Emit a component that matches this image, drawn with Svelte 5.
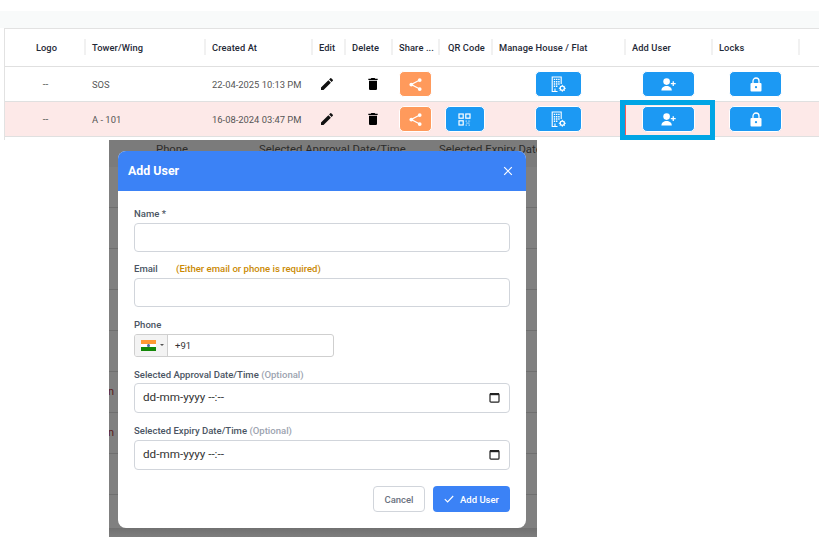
<script>
  const cols = [
    { label: 'Logo', center: true },
    { label: 'Tower/Wing' },
    { label: 'Created At' },
    { label: 'Edit' },
    { label: 'Delete' },
    { label: 'Share ...' },
    { label: 'QR Code', wide: true },
    { label: 'Manage House / Flat' },
    { label: 'Add User' },
    { label: 'Locks' },
    { label: '' }
  ];
  const rows = [
    { tower: 'SOS', created: '22-04-2025 10:13 PM', qr: false, alt: false },
    { tower: 'A - 101', created: '16-08-2024 03:47 PM', qr: true, alt: true }
  ];
</script>

<main class="page">
  <div class="band"></div>
  <section class="table">
    <div class="row head">
      {#each cols as c}
        <div class="th" class:center={c.center} class:wide={c.wide}><span>{c.label}</span></div>
      {/each}
    </div>
    {#each rows as r}
      <div class="row body" class:alt={r.alt}>
        <div class="td dash">--</div>
        <div class="td">{r.tower}</div>
        <div class="td">{r.created}</div>
        <div class="td ic c-edit">
          <svg width="16" height="16" viewBox="0 0 24 24" fill="#111"><path d="M3 17.25V21h3.75L17.81 9.94l-3.75-3.75L3 17.25zM20.71 7.04a1 1 0 0 0 0-1.41l-2.34-2.34a1 1 0 0 0-1.41 0l-1.83 1.83 3.75 3.75 1.83-1.83z"/></svg>
        </div>
        <div class="td ic c-del">
          <svg width="16" height="16" viewBox="0 0 24 24" fill="#000"><path d="M6 19c0 1.1.9 2 2 2h8c1.1 0 2-.9 2-2V7H6v12zM19 4h-3.5l-1-1h-5l-1 1H5v2h14V4z"/></svg>
        </div>
        <div class="td ic c-shift">
          <button class="btn orange w-share" aria-label="Share">
            <svg width="15" height="15" viewBox="0 0 16 16" fill="#fff" stroke="#fff"><path d="M12.5 3.2 3.5 8l9 4.8" fill="none" stroke-width="1.3"/><circle cx="12.5" cy="3.2" r="2" stroke="none"/><circle cx="3.5" cy="8" r="2" stroke="none"/><circle cx="12.5" cy="12.8" r="2" stroke="none"/></svg>
          </button>
        </div>
        <div class="td ic c-qr">
          {#if r.qr}
            <button class="btn blue w-qr" aria-label="QR Code">
              <svg width="13" height="13" viewBox="0 0 13 13" fill="none" stroke="#fff" stroke-width="1.2"><rect x="1" y="1" width="4.2" height="4.2"/><rect x="7.8" y="1" width="4.2" height="4.2"/><rect x="1" y="7.8" width="4.2" height="4.2"/><path d="M7.6 8.2h1.2M10.4 8.2h2M8.4 10.2h3M7.6 12.2h1.4M10.6 12.2h1.8" stroke-dasharray="1.2 .7" opacity=".75"/></svg>
            </button>
          {/if}
        </div>
        <div class="td ic c-shift">
          <button class="btn blue w-manage" aria-label="Manage House">
            <svg width="16" height="17" viewBox="0 0 16 17" fill="none"><path d="M6.5 15.5H1.2V1h9v7" stroke="#fff" stroke-width="1.1"/><path d="M2.8 2.7h1.4v1.4H2.8zM5 2.7h1.4v1.4H5zM7.2 2.7h1.4v1.4H7.2zM2.8 5h1.4v1.4H2.8zM5 5h1.4v1.4H5zM7.2 5h1.4v1.4H7.2zM2.8 7.3h1.4v1.4H2.8zM5 7.3h1.4v1.4H5zM7.2 7.3h1.4v1.4H7.2zM2.8 9.6h1.4V11H2.8zM5 9.6h1.4V11H5z" fill="#fff"/><path d="M4 15.5v-3" stroke="#fff" stroke-width="1.1"/><circle cx="11.3" cy="12.3" r="2.1" stroke="#fff" stroke-width="1.3"/><path d="M11.3 8.8v1.3M11.3 14.5v1.3M7.8 12.3h1.3M13.5 12.3h1.3M8.9 9.9l.8.8M12.9 13.9l.8.8M8.9 14.7l.8-.8M12.9 10.7l.8-.8" stroke="#fff" stroke-width="1"/></svg>
          </button>
        </div>
        <div class="td ic c-shift">
          <button class="btn blue w-user" aria-label="Add User">
            <svg width="15" height="13" viewBox="0 0 15 13" fill="#fff"><circle cx="5.6" cy="3.6" r="3.3"/><path d="M.4 12.6c0-3 2.4-4.6 5.2-4.6s5.2 1.6 5.2 4.6z"/><path d="M11.6 3.6h1.3v1.8h1.8v1.3h-1.8v1.8h-1.3V6.7H9.8V5.4h1.8z" transform="translate(0 -.4)"/></svg>
          </button>
        </div>
        <div class="td ic c-shift">
          <button class="btn blue w-user" aria-label="Locks">
            <svg width="12" height="15" viewBox="0 0 12 15"><path d="M3 6.5V4a3 3 0 0 1 6 0v2.5" fill="none" stroke="#fff" stroke-width="1.3"/><rect x=".5" y="6" width="11" height="8.5" rx="1" fill="#fff"/><circle cx="6" cy="10.2" r="1.1" fill="#1c99f3"/></svg>
          </button>
        </div>
        <div class="td"></div>
      </div>
    {/each}
  </section>

  <div class="highlight"></div>

  <div class="overlay">
    <div class="bg-head">
      <span class="bg-phone">Phone</span>
      <span class="bg-appr">Selected Approval Date/Time</span>
      <span class="bg-exp">Selected Expiry Date/Time</span>
    </div>
    {#each [0, 1, 2, 3, 4, 5, 6, 7] as i}
      <div class="bg-row">{#if i === 5 || i === 6}<span class="bg-n">n</span>{/if}</div>
    {/each}

    <div class="modal">
      <header class="m-head">
        <h2>Add User</h2>
        <svg width="10" height="10" viewBox="0 0 10 10" stroke="#fff" stroke-width="1.2"><path d="M1.2 1.2l7.6 7.6M8.8 1.2 1.2 8.8"/></svg>
      </header>
      <form class="m-body">
        <div class="field f-name">
          <div class="lab">Name *</div>
          <input class="inp" type="text" />
        </div>
        <div class="field f-email">
          <div class="lab">Email <span class="hint">(Either email or phone is required)</span></div>
          <input class="inp" type="text" />
        </div>
        <div class="field f-phone">
          <div class="lab">Phone</div>
          <div class="phone">
            <div class="flagbox">
              <span class="flag"><i class="saffron"></i><i class="white"><b></b></i><i class="green"></i></span>
              <span class="caret"></span>
            </div>
            <span class="code">+91</span>
          </div>
        </div>
        <div class="field f-date1">
          <div class="lab short">Selected Approval Date/Time <span class="opt">(Optional)</span></div>
          <div class="date"><span>dd-mm-yyyy --:--</span>
            <svg width="11" height="11" viewBox="0 0 11 11" fill="none"><rect x="1" y="1.6" width="9" height="8.6" rx="1" stroke="#222" stroke-width="1.2"/><rect x="1" y="1" width="9" height="2.2" fill="#222"/></svg>
          </div>
        </div>
        <div class="field f-date2">
          <div class="lab">Selected Expiry Date/Time <span class="opt">(Optional)</span></div>
          <div class="date"><span>dd-mm-yyyy --:--</span>
            <svg width="11" height="11" viewBox="0 0 11 11" fill="none"><rect x="1" y="1.6" width="9" height="8.6" rx="1" stroke="#222" stroke-width="1.2"/><rect x="1" y="1" width="9" height="2.2" fill="#222"/></svg>
          </div>
        </div>
        <div class="actions">
          <button type="button" class="cancel">Cancel</button>
          <button type="button" class="submit">
            <svg width="10" height="8" viewBox="0 0 10 8" fill="none" stroke="#fff" stroke-width="1.1"><path d="M.8 4.2 3.6 7 9.2 1"/></svg>
            Add User
          </button>
        </div>
      </form>
    </div>
  </div>
</main>

<style>
  :global(body) {
    margin: 0;
    background: #fff;
    font-family: Roboto, "Liberation Sans", sans-serif;
  }
  .page {
    position: relative;
    width: 831px;
    height: 559px;
    overflow: hidden;
    padding-top: 11px;
    box-sizing: border-box;
  }
  .band {
    width: 819px;
    height: 17px;
    background: #f8fafa;
  }
  .table {
    margin-left: 4px;
    width: 815px;
    height: 112px;
    border-top: 1px solid #e2e2e2;
    border-left: 1px solid #e2e2e2;
    box-sizing: border-box;
  }
  .row {
    display: grid;
    grid-template-columns: 81px 120px 107px 33px 47px 47px 53px 133px 87px 87px 19px;
    border-bottom: 1px solid #e0e0e0;
    box-sizing: border-box;
  }
  .head { height: 38px; }
  .body { height: 35px; }
  .alt { background: #fde9e8; }
  .th {
    display: flex;
    align-items: center;
    padding-left: 6px;
    font-size: 9.3px;
    font-weight: 500;
    letter-spacing: .1px;
    color: #1f2937;
    position: relative;
    white-space: nowrap;
    overflow: hidden;
  }
  .th.center { justify-content: center; padding-left: 2px; padding-right: 0; }
  .th.wide { padding-left: 8px; }
  .th::after {
    content: "";
    position: absolute;
    right: 0;
    top: 10px;
    height: 16px;
    width: 2px;
    background: #f1f1f1;
  }
  .th:last-child::after { display: none; }
  .td {
    display: flex;
    align-items: center;
    padding-left: 6px;
    font-size: 9.4px;
    color: #555;
    white-space: nowrap;
  }
  .dash { justify-content: center; padding-left: 0; font-size: 10px; color: #666; }
  .ic { justify-content: center; padding-left: 0; }
  .c-edit { padding-right: 6px; }
  .c-del { padding-left: 6px; }
  .c-shift { padding-right: 2px; }
  .c-qr { padding-right: 4px; }
  .btn {
    display: flex;
    align-items: center;
    justify-content: center;
    height: 26px;
    padding: 0;
    border: 1px solid #fff;
    border-radius: 5px;
    box-sizing: border-box;
    flex: none;
  }
  .orange { background: #ff9a5c; }
  .blue { background: #1c99f3; }
  .w-share { width: 33px; }
  .w-qr { width: 40px; }
  .w-manage { width: 47px; }
  .w-user { width: 53px; }
  .highlight {
    position: absolute;
    left: 620px;
    top: 100px;
    width: 95px;
    height: 40px;
    box-sizing: border-box;
    border: 5px solid #00a5e5;
  }
  .highlight::after {
    content: "";
    position: absolute;
    left: 0;
    top: 0;
    bottom: 0;
    width: 1px;
    background: #ef5a5a;
  }
  .overlay {
    position: absolute;
    left: 109px;
    top: 140px;
    width: 428px;
    height: 397px;
    overflow: hidden;
    background: #808080;
  }
  .bg-head {
    position: relative;
    height: 27px;
    background: #7b7b7b;
    font-size: 11.3px;
    font-weight: 400;
    color: #2b2b2b;
  }
  .bg-head span { position: absolute; top: 3px; white-space: nowrap; }
  .bg-phone { left: 47px; }
  .bg-appr { left: 150px; }
  .bg-exp { left: 330px; }
  .bg-row {
    height: 41px;
    border-bottom: 1px solid #6f6f6f;
    box-sizing: border-box;
    position: relative;
    color: #5a1a1a;
    font-size: 11px;
  }
  .bg-n { position: absolute; left: -1px; top: 13px; }
  .modal {
    position: absolute;
    left: 9px;
    top: 11px;
    width: 408px;
    height: 377px;
    background: #fff;
    border-radius: 8px;
    overflow: hidden;
  }
  .overlay::after {
    content: "";
    position: absolute;
    left: 0;
    right: 0;
    bottom: 0;
    height: 9px;
    background: linear-gradient(#66666699, #7a7a7a66);
    pointer-events: none;
  }
  .m-head {
    height: 40px;
    background: #3b82f6;
    display: flex;
    align-items: center;
    justify-content: space-between;
    padding: 0 13px 1px 10px;
    box-sizing: border-box;
  }
  .m-head h2 {
    margin: 0;
    font-size: 12.4px;
    font-weight: 700;
    color: #fff;
  }
  .m-body {
    position: relative;
    padding: 16px 16px 0;
    display: flex;
    flex-direction: column;
  }
  .field { display: flex; flex-direction: column; }
  .lab {
    height: 16px;
    line-height: 14px;
    font-size: 9.55px;
    font-weight: 500;
    color: #4b5563;
    white-space: nowrap;
  }
  .lab.short { height: 15px; }
  .f-email { margin-top: 10px; }
  .f-phone { margin-top: 11px; }
  .f-date1 { margin-top: 11px; }
  .f-date2 { margin-top: 11px; }
  .hint { margin-left: 16px; color: #ca8a04; }
  .opt { color: #9ca3af; }
  .inp {
    width: 376px;
    height: 29px;
    margin: 0;
    padding: 0 8px;
    box-sizing: border-box;
    border: 1px solid #d1d5db;
    border-radius: 4px;
    outline: none;
    background: #fff;
  }
  .phone {
    display: flex;
    align-items: center;
    width: 200px;
    height: 23px;
    box-sizing: border-box;
    border: 1px solid #cfcfcf;
    border-radius: 3px;
    overflow: hidden;
  }
  .flagbox {
    display: flex;
    align-items: center;
    width: 33px;
    height: 100%;
    padding-left: 6px;
    box-sizing: border-box;
    background: #f3f3f3;
    border-right: 1px solid #cfcfcf;
  }
  .flag {
    display: flex;
    flex-direction: column;
    width: 15px;
    height: 11px;
  }
  .flag i { display: block; flex: 1; position: relative; }
  .saffron { background: #ff9933; }
  .white { background: #fff; }
  .white b {
    position: absolute;
    left: 6px;
    top: 0;
    width: 3px;
    height: 3.6px;
    border-radius: 50%;
    background: #4f6fa8;
  }
  .green { background: #138808; }
  .caret {
    margin-left: 4px;
    margin-top: -2px;
    border-left: 2px solid transparent;
    border-right: 2px solid transparent;
    border-top: 2px solid #555;
  }
  .code { margin-left: 7px; font-size: 9.5px; color: #333; }
  .date {
    display: flex;
    align-items: center;
    justify-content: space-between;
    width: 376px;
    box-sizing: border-box;
    height: 30px;
    padding: 0 9px 2px 8px;
    border: 1px solid #d1d5db;
    border-radius: 4px;
    font-size: 11.7px;
    color: #333;
  }
  .actions {
    display: flex;
    justify-content: flex-end;
    gap: 8px;
    margin-top: 16px;
  }
  .cancel, .submit {
    height: 26px;
    padding: 0;
    border-radius: 4px;
    font-family: inherit;
    font-size: 9.5px;
    font-weight: 500;
    box-sizing: border-box;
  }
  .cancel {
    width: 52px;
    border: 1px solid #d1d5db;
    background: #fff;
    color: #6b7280;
  }
  .submit {
    width: 77px;
    border: none;
    background: #3b82f6;
    color: #fff;
    display: flex;
    align-items: center;
    justify-content: center;
    gap: 6px;
  }
</style>
